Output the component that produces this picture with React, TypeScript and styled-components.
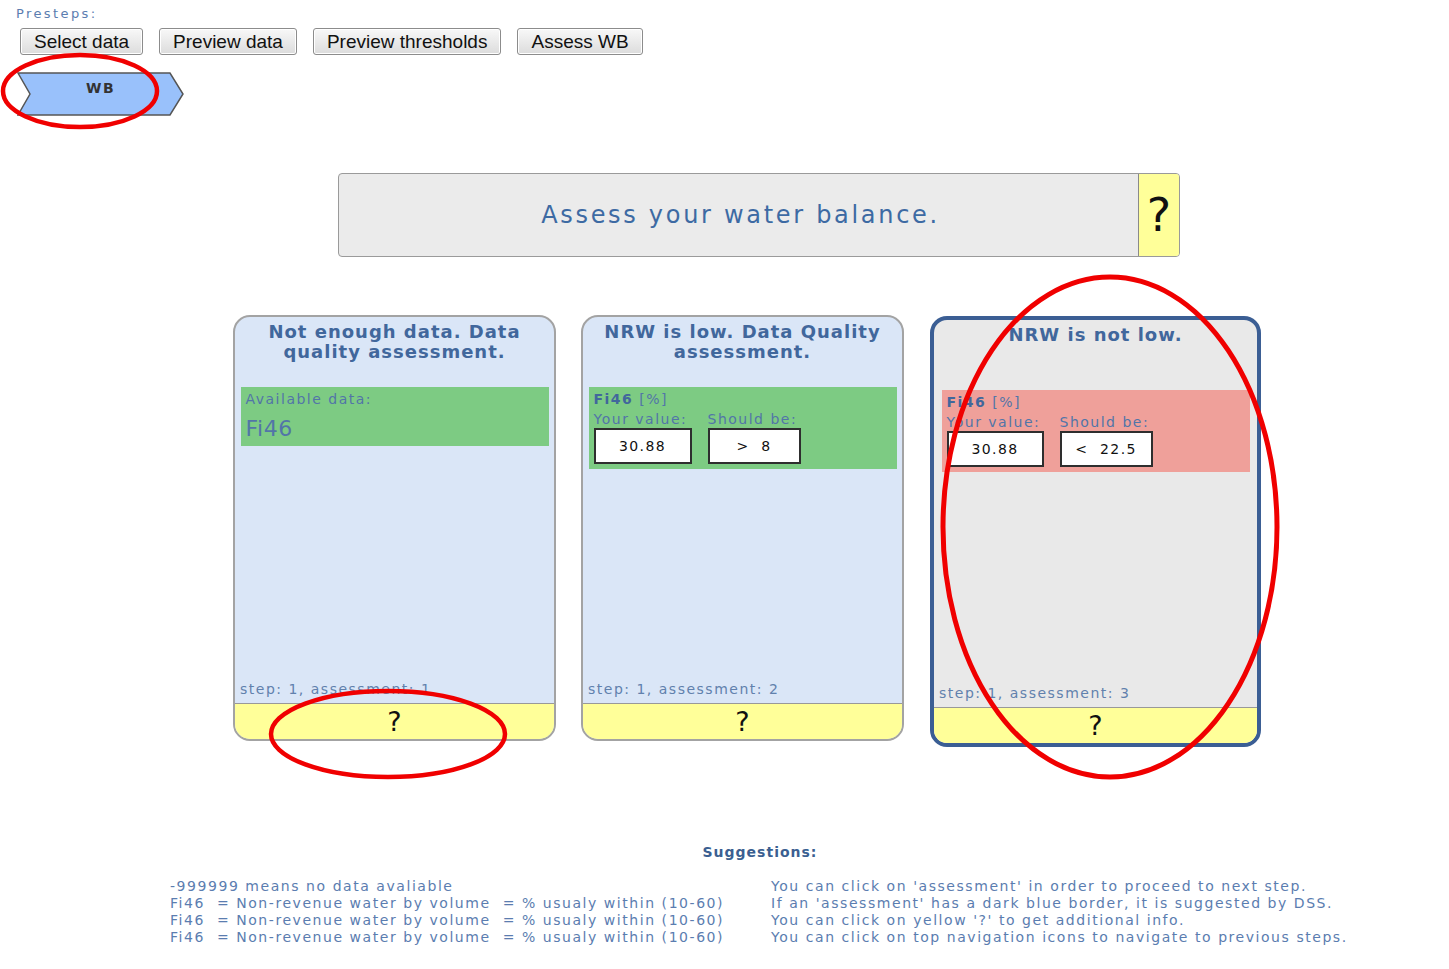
import React from "react";
import styled, { createGlobalStyle, css } from "styled-components";

const GlobalStyle = createGlobalStyle`
  html, body { margin: 0; padding: 0; background: #ffffff; }
  body { font-family: "DejaVu Sans", Verdana, sans-serif; }
  #root { position: relative; min-height: 969px; }
`;

const Page = styled.div`
  position: relative;
  width: 1449px;
  min-height: 969px;
  padding-top: 6px;
  box-sizing: border-box;
`;

const PrestepsLabel = styled.div`
  margin-left: 16px;
  font-size: 13px;
  line-height: 16px;
  letter-spacing: 2.4px;
  color: #5b7db0;
`;

const ButtonRow = styled.div`
  display: flex;
  gap: 16px;
  margin: 6px 0 0 20px;
`;

const NavButton = styled.button`
  height: 27px;
  padding: 0 13px;
  font-family: "Liberation Sans", Arial, sans-serif;
  font-size: 19px;
  line-height: 25px;
  color: #111;
  border: 1px solid #8c8c8c;
  border-radius: 3px;
  background: linear-gradient(#f8f8f8, #dcdcdc);
  box-shadow: inset 0 0 0 1px #fff;
`;

const Chevron = styled.div`
  position: relative;
  width: 167px;
  height: 44px;
  margin: 17px 0 0 17px;
  display: flex;
  justify-content: flex-start;
`;

const ChevronShape = styled.svg`
  position: absolute;
  inset: 0;
`;

const ChevronLabel = styled.span`
  position: relative;
  margin: 8px 0 0 69px;
  font-weight: bold;
  font-size: 14px;
  letter-spacing: 1.5px;
  color: #333;
`;

const HeaderBox = styled.div`
  display: flex;
  width: 842px;
  height: 84px;
  margin: 57px 0 0 338px;
  box-sizing: border-box;
  border: 1.5px solid #9a9a9a;
  border-radius: 4px;
  background: #ebebeb;
  overflow: hidden;
`;

const HeaderText = styled.div`
  flex: 1;
  display: flex;
  align-items: center;
  justify-content: center;
  font-size: 24px;
  letter-spacing: 2.7px;
  color: #3d6aa3;
  padding-left: 4px;
`;

const HeaderHelp = styled.div`
  width: 40px;
  display: flex;
  align-items: center;
  justify-content: center;
  background: #ffff99;
  border-left: 1.5px solid #8a8a8a;
  font-size: 46px;
  color: #111;
`;

const CardRow = styled.div`
  display: flex;
  align-items: flex-start;
  gap: 25px;
  margin: 58px 0 0 233px;
`;

const Card = styled.div<{ $suggested?: boolean }>`
  display: flex;
  flex-direction: column;
  box-sizing: border-box;
  width: 323px;
  height: 426px;
  border: 2px solid #a3a3a3;
  border-radius: 17px;
  background: #dae6f7;
  overflow: hidden;
  ${(p) =>
    p.$suggested &&
    css`
      width: 331px;
      height: 431px;
      margin-top: 1px;
      margin-left: 1px;
      border: 4px solid #3b5e94;
      background: #e9e9e9;
    `}
`;

const CardTitle = styled.div`
  height: 40px;
  padding: 5px 6px 0;
  margin-bottom: 25px;
  text-align: center;
  font-weight: bold;
  font-size: 18px;
  line-height: 20px;
  letter-spacing: 1px;
  color: #41679c;
`;

const DataBlock = styled.div<{ $tone: "green" | "red" }>`
  align-self: center;
  width: 308px;
  box-sizing: border-box;
  padding: 4px 5px 5px;
  background: ${(p) => (p.$tone === "green" ? "#7dcb83" : "#efa09a")};
`;

const SmallText = styled.div`
  font-size: 14px;
  line-height: 17px;
  letter-spacing: 1.5px;
  color: #5275a8;
  white-space: nowrap;
`;

const BigCode = styled.div`
  font-size: 22px;
  line-height: 24px;
  letter-spacing: 0.5px;
  color: #5275a8;
  margin-top: 9px;
`;

const Bold = styled.b`
  color: #41679c;
`;

const ValueRow = styled.div`
  display: flex;
  gap: 16px;
  margin-top: 3px;
`;

const ValueCol = styled.div<{ $w: number }>`
  display: flex;
  flex-direction: column;
  width: ${(p) => p.$w}px;
`;

const ValueBox = styled.div`
  height: 36px;
  box-sizing: border-box;
  border: 2px solid #2e2e2e;
  background: #fff;
  display: flex;
  align-items: center;
  justify-content: center;
  font-size: 14px;
  letter-spacing: 1.4px;
  color: #111;
  white-space: pre;
`;

const Spacer = styled.div`
  flex: 1;
`;

const StepText = styled(SmallText)`
  padding: 0 0 5px 5px;
  color: #6181ad;
`;

const HelpFooter = styled.div`
  height: 35px;
  flex-shrink: 0;
  border-top: 1.5px solid #999;
  background: #ffff99;
  display: flex;
  align-items: center;
  justify-content: center;
  font-size: 27px;
  color: #111;
`;

const Suggestions = styled.div`
  width: 1180px;
  margin: 97px 0 0 170px;
  color: #5b7db0;
  font-size: 14px;
  line-height: 17px;
  letter-spacing: 1.55px;
`;

const SuggestTitle = styled.div`
  text-align: center;
  font-weight: bold;
  color: #3b5f91;
  letter-spacing: 1px;
  margin-bottom: 17px;
`;

const SuggestColumns = styled.div`
  display: grid;
  grid-template-columns: 601px 1fr;
`;

const SuggestLine = styled.div`
  white-space: pre;
`;

const Annotations = styled.svg`
  position: absolute;
  top: 0;
  left: 0;
  pointer-events: none;
`;

type Assessment = {
  title: string;
  tone: "green" | "red";
  suggested?: boolean;
  step: string;
  kind: "available" | "compare";
  should?: string;
  widths?: [number, number];
};

const cards: Assessment[] = [
  {
    title: "Not enough data. Data quality assessment.",
    tone: "green",
    step: "step: 1, assessment: 1",
    kind: "available",
  },
  {
    title: "NRW is low. Data Quality assessment.",
    tone: "green",
    step: "step: 1, assessment: 2",
    kind: "compare",
    should: ">  8",
    widths: [98, 93],
  },
  {
    title: "NRW is not low.",
    tone: "red",
    suggested: true,
    step: "step: 1, assessment: 3",
    kind: "compare",
    should: "<  22.5",
    widths: [97, 93],
  },
];

const leftLines = [
  "-999999 means no data avaliable",
  "Fi46  = Non-revenue water by volume  = % usualy within (10-60)",
  "Fi46  = Non-revenue water by volume  = % usualy within (10-60)",
  "Fi46  = Non-revenue water by volume  = % usualy within (10-60)",
];

const rightLines = [
  "You can click on 'assessment' in order to proceed to next step.",
  "If an 'assessment' has a dark blue border, it is suggested by DSS.",
  "You can click on yellow '?' to get additional info.",
  "You can click on top navigation icons to navigate to previous steps.",
];

export default function App() {
  return (
    <Page>
      <GlobalStyle />
      <PrestepsLabel>Presteps:</PrestepsLabel>
      <ButtonRow>
        <NavButton>Select data</NavButton>
        <NavButton>Preview data</NavButton>
        <NavButton>Preview thresholds</NavButton>
        <NavButton>Assess WB</NavButton>
      </ButtonRow>
      <Chevron>
        <ChevronShape width="167" height="44" viewBox="0 0 167 44">
          <polygon
            points="1,1 153,1 166,22 153,43 1,43 13,22"
            fill="#99c1fb"
            stroke="#555"
            strokeWidth="1.5"
          />
        </ChevronShape>
        <ChevronLabel>WB</ChevronLabel>
      </Chevron>

      <HeaderBox>
        <HeaderText>Assess your water balance.</HeaderText>
        <HeaderHelp>?</HeaderHelp>
      </HeaderBox>

      <CardRow>
        {cards.map((c, i) => (
          <Card key={i} $suggested={c.suggested}>
            <CardTitle>{c.title}</CardTitle>
            <DataBlock $tone={c.tone}>
              {c.kind === "available" ? (
                <>
                  <SmallText>Available data:</SmallText>
                  <BigCode>Fi46</BigCode>
                </>
              ) : (
                <>
                  <SmallText>
                    <Bold>Fi46</Bold> [%]
                  </SmallText>
                  <ValueRow>
                    <ValueCol $w={c.widths![0]}>
                      <SmallText>Your value:</SmallText>
                      <ValueBox>30.88</ValueBox>
                    </ValueCol>
                    <ValueCol $w={c.widths![1]}>
                      <SmallText>Should be:</SmallText>
                      <ValueBox>{c.should}</ValueBox>
                    </ValueCol>
                  </ValueRow>
                </>
              )}
            </DataBlock>
            <Spacer />
            <StepText>{c.step}</StepText>
            <HelpFooter>?</HelpFooter>
          </Card>
        ))}
      </CardRow>

      <Suggestions>
        <SuggestTitle>Suggestions:</SuggestTitle>
        <SuggestColumns>
          <div>
            {leftLines.map((l, i) => (
              <SuggestLine key={i}>{l}</SuggestLine>
            ))}
          </div>
          <div>
            {rightLines.map((l, i) => (
              <SuggestLine key={i}>{l}</SuggestLine>
            ))}
          </div>
        </SuggestColumns>
      </Suggestions>

      <Annotations width="1449" height="969" viewBox="0 0 1449 969">
        <g fill="none" stroke="#f00000" strokeWidth="4.5">
          <ellipse cx="80" cy="91" rx="77" ry="36" />
          <ellipse cx="388" cy="734" rx="117" ry="43" />
          <ellipse cx="1110" cy="527" rx="167" ry="250" strokeWidth="5" />
        </g>
      </Annotations>
    </Page>
  );
}
